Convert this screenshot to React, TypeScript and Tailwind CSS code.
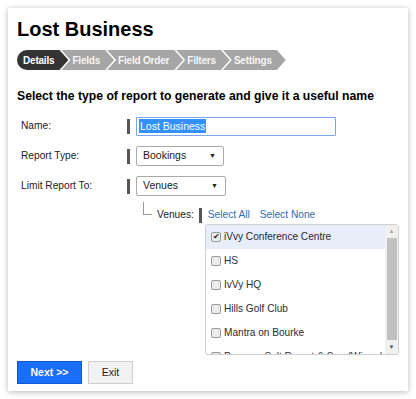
import { useState } from 'react';

const steps = ['Details', 'Fields', 'Field Order', 'Filters', 'Settings'];

const venues = [
  { name: 'iVvy Conference Centre', checked: true },
  { name: 'HS', checked: false },
  { name: 'IvVy HQ', checked: false },
  { name: 'Hills Golf Club', checked: false },
  { name: 'Mantra on Bourke', checked: false },
  { name: 'Peppers Salt Resort & Spa (Wizard', checked: false },
];

function Bar() {
  return <span className="inline-block w-[3px] h-[15px] bg-[#555] mr-[6px]" />;
}

function Select({ value, width }: { value: string; width: string }) {
  return (
    <div
      className={`${width} h-[20px] border border-[#a9a9a9] rounded-[2px] bg-white flex items-center justify-between pl-[6px] pr-[7px] text-[10.5px] text-[#222]`}
    >
      <span>{value}</span>
      <span className="text-[7px]">▼</span>
    </div>
  );
}

export default function App() {
  const [list, setList] = useState(venues);

  return (
    <div className="w-[416px] h-[399px] bg-white p-[8px] font-['Liberation_Sans',Arial,sans-serif] text-[#222]">
      <div className="w-[400px] h-[383px] bg-white shadow-[0_1px_6px_rgba(0,0,0,0.28)] pl-[9px] pr-[9px] pt-[6px] flex flex-col">
        {/* title */}
        <h1 className="text-[20px] font-bold leading-[30px] text-black">Lost Business</h1>

        {/* wizard steps */}
        <div className="flex mt-[6px] h-[20px]">
          {steps.map((s, i) => (
            <div
              key={s}
              className={
                i === 0
                  ? 'h-[20px] bg-[#333] text-white rounded-l-[10px] pl-[6px] pr-[14px] flex items-center text-[10px] font-bold tracking-[-0.2px] [clip-path:polygon(0_0,calc(100%-9px)_0,100%_50%,calc(100%-9px)_100%,0_100%)]'
                  : 'h-[20px] bg-[#a6a6a6] text-[#f6f6f6] ml-[-7px] pl-[11px] pr-[14px] flex items-center text-[10px] font-bold tracking-[-0.2px] [clip-path:polygon(0_0,calc(100%-9px)_0,100%_50%,calc(100%-9px)_100%,0_100%,9px_50%)]'
              }
            >
              {s}
            </div>
          ))}
        </div>

        {/* heading */}
        <h2 className="mt-[18px] text-[12.2px] font-bold leading-[16px] text-black whitespace-nowrap">
          Select the type of report to generate and give it a useful name
        </h2>

        {/* form rows */}
        <div className="mt-[12px] flex flex-col gap-[10px] pl-[4px] text-[10.2px]">
          <div className="flex items-center h-[20px]">
            <span className="w-[106px]">Name:</span>
            <Bar />
            <div className="w-[200px] h-[19px] border border-[#7aa4f0] rounded-[1px] px-[2px] flex items-center text-[10.5px]">
              <span className="bg-[#3390ff] text-white leading-[14px] px-[1px]">Lost Business</span>
            </div>
          </div>
          <div className="flex items-center h-[20px]">
            <span className="w-[106px]">Report Type:</span>
            <Bar />
            <Select value="Bookings" width="w-[88px]" />
          </div>
          <div className="flex items-center h-[20px]">
            <span className="w-[106px]">Limit Report To:</span>
            <Bar />
            <Select value="Venues" width="w-[90px]" />
          </div>
        </div>

        {/* venues */}
        <div className="flex items-center ml-[126px] mt-[10px] h-[18px] text-[10.2px]">
          <span className="w-[9px] h-[13px] border-l border-b border-[#999] mt-[-14px] mr-[5px]" />
          <span>Venues:</span>
          <span className="inline-block w-[3px] h-[15px] bg-[#555] ml-[5px] mr-[6px]" />
          <a className="text-[#2f6db3]">Select All</a>
          <a className="text-[#2f6db3] ml-[10px]">Select None</a>
        </div>

        <div className="ml-[188px] w-[194px] h-[131px] border border-[#cfcfcf] rounded-[3px] flex overflow-hidden">
          <div className="flex-1 overflow-hidden">
            {list.map((v, i) => (
              <div
                key={v.name}
                onClick={() =>
                  setList(list.map((x, j) => (j === i ? { ...x, checked: !x.checked } : x)))
                }
                className={`flex items-center h-[24px] pl-[5px] text-[10.1px] whitespace-nowrap text-[#2c2836] ${
                  i === 0 ? 'bg-[#e8eef9]' : ''
                }`}
              >
                <span className="w-[10px] h-[10px] mr-[3px] border border-[#9a9a9a] rounded-[2px] bg-[#ececec] flex items-center justify-center text-[8px] leading-none text-[#222]">
                  {v.checked ? '✔' : ''}
                </span>
                {v.name}
              </div>
            ))}
          </div>
          <div className="w-[13px] bg-[#f0f0f0] flex flex-col items-center">
            <span className="h-[13px] text-[6px] leading-[13px] text-[#a8a8a8]">▲</span>
            <div className="w-[10px] flex-1 bg-[#c1c1c1] mb-[1px]" />
            <span className="h-[13px] text-[6px] leading-[13px] text-[#505050]">▼</span>
          </div>
        </div>

        {/* buttons */}
        <div className="flex gap-[6px] mt-[6px]">
          <button className="w-[65px] h-[23px] bg-[#1b6ef7] border border-[#1257d0] text-white text-[10.5px] font-bold">
            Next &gt;&gt;
          </button>
          <button className="w-[45px] h-[23px] bg-[#f2f2f2] border border-[#cfcfcf] text-[#222] text-[10.5px]">
            Exit
          </button>
        </div>
      </div>
    </div>
  );
}
